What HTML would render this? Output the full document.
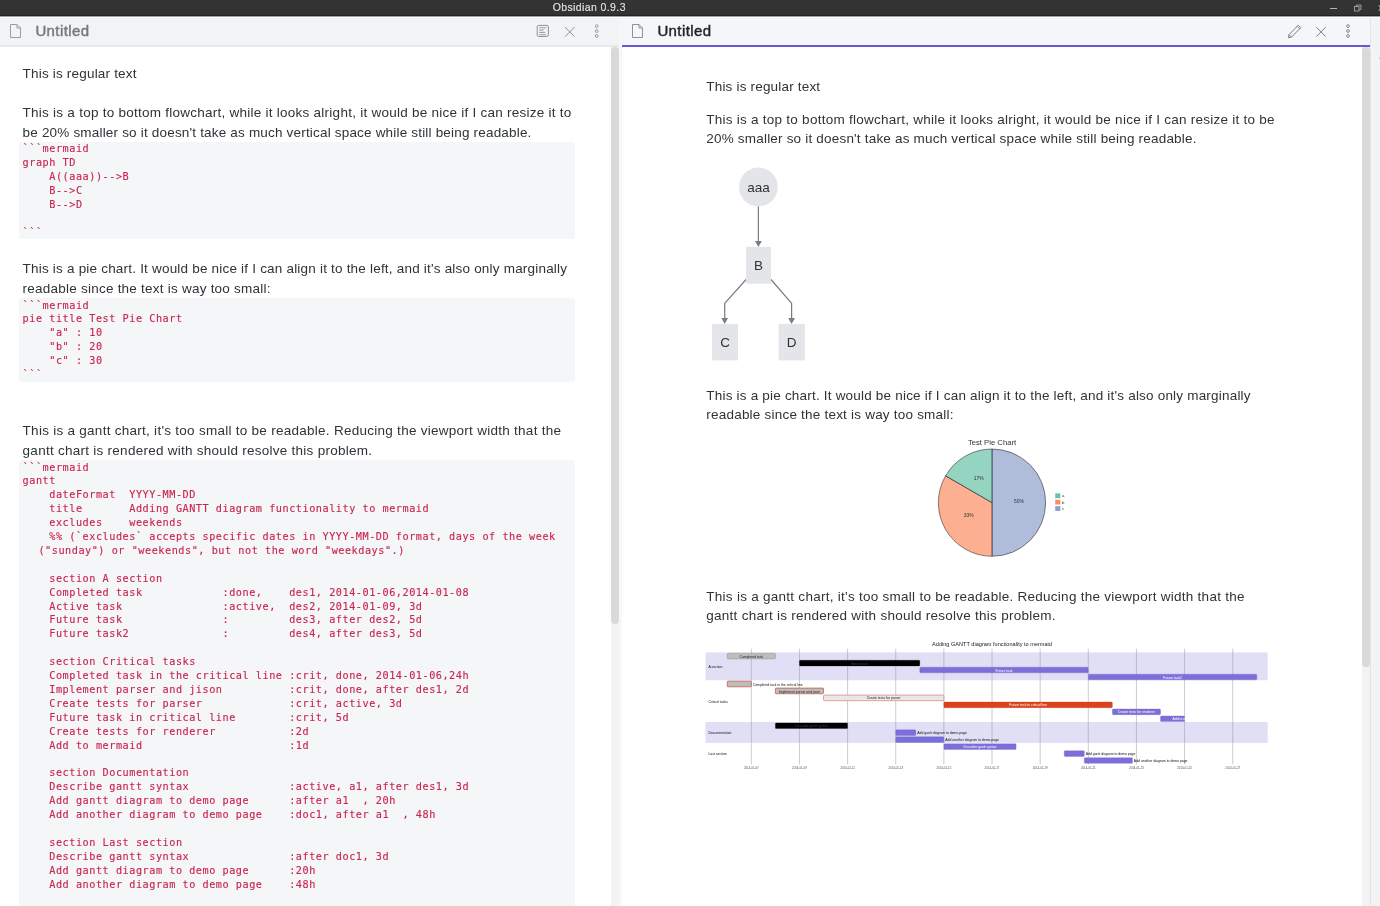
<!DOCTYPE html><html lang="en"><head><meta charset="utf-8"><title>Obsidian 0.9.3</title><style>
*{margin:0;padding:0;box-sizing:border-box}
html,body{width:1380px;height:906px;overflow:hidden;background:#f2f3f5}
body{font-family:"Liberation Sans",sans-serif;color:#2e3338;position:relative}
#app{position:absolute;left:0;top:0;width:1380px;height:906px;overflow:hidden;will-change:transform}
.abs{position:absolute}
.tb{position:absolute;left:0;top:0;width:1380px;height:16px;background:#333;border-bottom:1px solid #222}
.tbt{position:absolute;left:552.7px;top:0;height:15px;line-height:15px;font-size:10.5px;color:#d2d2d2;letter-spacing:.39px;white-space:nowrap;text-shadow:0 0 .4px #d2d2d2}
.gap{position:absolute;left:0;top:16px;width:1380px;height:3px;background:#fbfbfc;border-top:1px solid #a2a2a3;border-bottom:1px solid #f6f7f8}
.hdr{position:absolute;top:18px;height:27px}
.ttl{position:absolute;top:0;height:27px;line-height:27px;font-size:15px;white-space:nowrap;letter-spacing:.4px;-webkit-text-stroke:.45px currentColor}
.t{position:absolute;white-space:nowrap;font-size:13.5px;line-height:19.65px;height:19.65px;color:#2e3338}
.c{position:absolute;white-space:pre;font-family:"DejaVu Sans Mono","Liberation Mono",monospace;letter-spacing:0.5311px;font-size:10.2px;line-height:13.9px;height:13.9px;color:#c9254f;left:22.6px;-webkit-text-stroke:.13px #c9254f}
.cb{position:absolute;left:19px;width:556px;background:#f5f6f8;border-radius:3px}
svg{position:absolute;overflow:visible}
svg text{font-family:"Liberation Sans",sans-serif}
</style></head><body><div id="app">
<div class="tb"><div class="tbt">Obsidian 0.9.3</div>
<svg style="left:1320px;top:0" width="60" height="16" viewBox="0 0 60 16" fill="none" stroke="#9a9a9a" stroke-width="1"><path d="M10 8.5h7" stroke="#b4b4b4"/><rect x="34.5" y="6.5" width="4.5" height="4.5"/><path d="M36.5 6.5V5H41v4.5h-2"/><path d="M58.5 5l4 6M62.5 5l-4 6"/></svg>
</div><div class="gap"></div>
<div class="abs" style="left:0;top:18px;width:619px;height:888px;background:#fff"></div>
<div class="hdr" style="left:0;width:619px;background:#f2f3f5"></div>
<div class="abs" style="left:0;top:45px;width:619px;height:2px;background:#e7e8ea"></div>
<div class="ttl" style="left:35.4px;top:17px;color:#76797f">Untitled</div>
<div class="abs" style="left:619px;top:18px;width:3px;height:888px;background:#f7f8fa"></div>
<div class="abs" style="left:622px;top:18px;width:748px;height:888px;background:#fff"></div>
<div class="hdr" style="left:619px;width:751px;background:#f5f6f8"></div>
<div class="abs" style="left:622px;top:45px;width:748px;height:2px;background:#6658d8"></div>
<div class="ttl" style="left:657.4px;top:17px;color:#1f2329">Untitled</div>
<div class="abs" style="left:1370px;top:18px;width:1px;height:888px;background:#e4e5e7"></div>
<div class="abs" style="left:1378.6px;top:57px;width:3px;height:2px;background:#c3c5c9;border-radius:1px"></div>
<svg style="left:10px;top:24px" width="12" height="15" viewBox="0 0 12 15" fill="none" stroke="#9b9da3" stroke-width="1" stroke-linejoin="round"><path d="M.5.5H7L10.5 4v9.5H.5z"/><path d="M7 .5V4h3.5"/></svg>
<svg style="left:632px;top:24px" width="12" height="15" viewBox="0 0 12 15" fill="none" stroke="#8d9096" stroke-width="1" stroke-linejoin="round"><path d="M.5.5H7L10.5 4v9.5H.5z"/><path d="M7 .5V4h3.5"/></svg>
<svg style="left:536px;top:24px" width="14" height="14" viewBox="0 0 14 14" fill="none" stroke="#8e9197" stroke-width="1"><g transform="translate(0.70 0.90)"><rect x=".5" y=".5" width="11.2" height="11.1" rx="1.6"/><path d="M2.5 2.9h7M2.5 5.2h4.6M2.5 7.5h6M2.5 9.8h7" stroke-width=".9"/></g></svg>
<svg style="left:565px;top:27px" width="12" height="12" viewBox="0 0 12 12" fill="none" stroke="#8e9197" stroke-width="1"><g transform="translate(0.10 0.20)"><path d="M0 0l9.40 9.40M9.40 0L0 9.40"/></g></svg>
<svg style="left:593px;top:23px" width="7" height="17" viewBox="0 0 7 17" fill="none" stroke="#8e9197" stroke-width=".9"><g transform="translate(0.70 0.20)"><circle cx="3" cy="3" r="1.4"/><circle cx="3" cy="7.9" r="1.4"/><circle cx="3" cy="12.8" r="1.4"/></g></svg>
<svg style="left:1287px;top:24px" width="15" height="15" viewBox="0 0 15 15" fill="none" stroke="#7c7f85" stroke-width="1" stroke-linejoin="round"><g transform="translate(0.70 0.40)"><path d="M10.6.8l2.5 2.5-9.4 9.4-3 .6.6-3z"/><path d="M9.5 1.9l2.5 2.5M1.3 10.3l2.4 2.4"/></g></svg>
<svg style="left:1316px;top:27px" width="12" height="12" viewBox="0 0 12 12" fill="none" stroke="#7c7f85" stroke-width="1"><g transform="translate(0.30 0.20)"><path d="M0 0l9.40 9.40M9.40 0L0 9.40"/></g></svg>
<svg style="left:1345px;top:23px" width="7" height="17" viewBox="0 0 7 17" fill="none" stroke="#7c7f85" stroke-width=".9"><g transform="translate(0.00 0.10)"><circle cx="3" cy="3" r="1.4"/><circle cx="3" cy="7.9" r="1.4"/><circle cx="3" cy="12.8" r="1.4"/></g></svg>
<div class="abs" style="left:611px;top:47px;width:8px;height:859px;background:#f3f3f3"></div>
<div class="abs" style="left:611px;top:47px;width:8px;height:577px;background:#d9d9d9;border-radius:4px"></div>
<div class="abs" style="left:1362px;top:47px;width:8px;height:859px;background:#f3f3f3"></div>
<div class="abs" style="left:1362px;top:47px;width:8px;height:620px;background:#d9d9d9;border-radius:4px"></div>
<div class="t" id="l1" style="left:22.60px;top:63.70px;letter-spacing:0.190px">This is regular text</div>
<div class="t" id="l2" style="left:22.60px;top:103.00px;letter-spacing:0.253px">This is a top to bottom flowchart, while it looks alright, it would be nice if I can resize it to</div>
<div class="t" id="l3" style="left:22.60px;top:122.65px;letter-spacing:0.186px">be 20% smaller so it doesn't take as much vertical space while still being readable.</div>
<div class="cb" style="top:141.90px;height:97.30px"></div>
<div class="c" style="top:142.30px">```mermaid</div>
<div class="c" style="top:156.20px">graph TD</div>
<div class="c" style="top:170.10px">    A((aaa))--&gt;B</div>
<div class="c" style="top:184.00px">    B--&gt;C</div>
<div class="c" style="top:197.90px">    B--&gt;D</div>
<div class="c" style="top:225.70px">```</div>
<div class="t" id="l4" style="left:22.60px;top:259.25px;letter-spacing:0.202px">This is a pie chart. It would be nice if I can align it to the left, and it's also only marginally</div>
<div class="t" id="l5" style="left:22.60px;top:278.90px;letter-spacing:0.232px">readable since the text is way too small:</div>
<div class="cb" style="top:298.15px;height:83.40px"></div>
<div class="c" style="top:298.55px">```mermaid</div>
<div class="c" style="top:312.45px">pie title Test Pie Chart</div>
<div class="c" style="top:326.35px">    "a" : 10</div>
<div class="c" style="top:340.25px">    "b" : 20</div>
<div class="c" style="top:354.15px">    "c" : 30</div>
<div class="c" style="top:368.05px">```</div>
<div class="t" id="l6" style="left:22.60px;top:421.25px;letter-spacing:0.270px">This is a gantt chart, it's too small to be readable. Reducing the viewport width that the</div>
<div class="t" id="l7" style="left:22.60px;top:440.90px;letter-spacing:0.263px">gantt chart is rendered with should resolve this problem.</div>
<div class="cb" style="top:460.15px;height:449.45px"></div>
<div class="c" style="top:460.55px">```mermaid</div>
<div class="c" style="top:474.45px">gantt</div>
<div class="c" style="top:488.35px">    dateFormat  YYYY-MM-DD</div>
<div class="c" style="top:502.25px">    title       Adding GANTT diagram functionality to mermaid</div>
<div class="c" style="top:516.15px">    excludes    weekends</div>
<div class="c" style="top:530.05px">    %% (`excludes` accepts specific dates in YYYY-MM-DD format, days of the week</div>
<div class="c" style="top:543.95px;left:38.4px">("sunday") or "weekends", but not the word "weekdays".)</div>
<div class="c" style="top:571.75px">    section A section</div>
<div class="c" style="top:585.65px">    Completed task            :done,    des1, 2014-01-06,2014-01-08</div>
<div class="c" style="top:599.55px">    Active task               :active,  des2, 2014-01-09, 3d</div>
<div class="c" style="top:613.45px">    Future task               :         des3, after des2, 5d</div>
<div class="c" style="top:627.35px">    Future task2              :         des4, after des3, 5d</div>
<div class="c" style="top:655.15px">    section Critical tasks</div>
<div class="c" style="top:669.05px">    Completed task in the critical line :crit, done, 2014-01-06,24h</div>
<div class="c" style="top:682.95px">    Implement parser and jison          :crit, done, after des1, 2d</div>
<div class="c" style="top:696.85px">    Create tests for parser             :crit, active, 3d</div>
<div class="c" style="top:710.75px">    Future task in critical line        :crit, 5d</div>
<div class="c" style="top:724.65px">    Create tests for renderer           :2d</div>
<div class="c" style="top:738.55px">    Add to mermaid                      :1d</div>
<div class="c" style="top:766.35px">    section Documentation</div>
<div class="c" style="top:780.25px">    Describe gantt syntax               :active, a1, after des1, 3d</div>
<div class="c" style="top:794.15px">    Add gantt diagram to demo page      :after a1  , 20h</div>
<div class="c" style="top:808.05px">    Add another diagram to demo page    :doc1, after a1  , 48h</div>
<div class="c" style="top:835.85px">    section Last section</div>
<div class="c" style="top:849.75px">    Describe gantt syntax               :after doc1, 3d</div>
<div class="c" style="top:863.65px">    Add gantt diagram to demo page      :20h</div>
<div class="c" style="top:877.55px">    Add another diagram to demo page    :48h</div>
<div class="t" id="r1" style="left:706.30px;top:76.80px;letter-spacing:0.184px">This is regular text</div>
<div class="t" id="r2" style="left:706.30px;top:109.65px;letter-spacing:0.252px">This is a top to bottom flowchart, while it looks alright, it would be nice if I can resize it to be</div>
<div class="t" id="r3" style="left:706.30px;top:129.30px;letter-spacing:0.195px">20% smaller so it doesn't take as much vertical space while still being readable.</div>
<div class="t" id="r4" style="left:706.30px;top:385.50px;letter-spacing:0.200px">This is a pie chart. It would be nice if I can align it to the left, and it's also only marginally</div>
<div class="t" id="r5" style="left:706.30px;top:405.15px;letter-spacing:0.214px">readable since the text is way too small:</div>
<div class="t" id="r6" style="left:706.30px;top:586.80px;letter-spacing:0.268px">This is a gantt chart, it's too small to be readable. Reducing the viewport width that the</div>
<div class="t" id="r7" style="left:706.30px;top:606.45px;letter-spacing:0.259px">gantt chart is rendered with should resolve this problem.</div>
<svg style="left:700px;top:160px" width="120" height="210" viewBox="700 160 120 210">
<g fill="none" stroke="#7b7d84" stroke-width="1.25" stroke-linejoin="round"><path d="M758.4 206v36"/><path d="M746.1 279.5L724.7 303.4V319"/><path d="M771 279.5L791.6 303.4V319"/></g>
<g fill="#7b7d84"><path d="M755 241h6.8l-3.4 5.9z"/><path d="M721.3 318h6.8l-3.4 5.9z"/><path d="M788.2 318h6.8l-3.4 5.9z"/></g>
<g fill="#e3e5e8"><circle cx="758.4" cy="187" r="19.4"/><rect x="746.1" y="246.9" width="24.9" height="36.7"/><rect x="712.1" y="323.9" width="25.9" height="36.5"/><rect x="778.6" y="323.9" width="26.3" height="36.5"/></g>
<g font-size="13.5" fill="#2e3338" text-anchor="middle"><text x="758.4" y="191.7">aaa</text><text x="758.5" y="270">B</text><text x="725" y="347">C</text><text x="791.7" y="347">D</text></g>
</svg>
<svg style="left:705px;top:437px" width="574" height="132" viewBox="-1.724 -1.379 1979.310 455.172">
<path d="M988.0 225.0L988.0 40.0A185 185 0 0 1 988.0 410.0Z" fill="#8da0cb" fill-opacity=".7" stroke="#111" stroke-width="1.7"/>
<path d="M988.0 225.0L988.0 410.0A185 185 0 0 1 827.8 132.5Z" fill="#fc8d62" fill-opacity=".7" stroke="#111" stroke-width="1.7"/>
<path d="M988.0 225.0L827.8 132.5A185 185 0 0 1 988.0 40.0Z" fill="#66c2a5" fill-opacity=".7" stroke="#111" stroke-width="1.7"/>
<g font-size="17" fill="#333" text-anchor="middle">
<text x="1080.5" y="227.5">50%</text>
<text x="907.9" y="273.8">33%</text>
<text x="941.8" y="147.4">17%</text>
</g>
<text x="988" y="25" font-size="26.5" fill="#333" text-anchor="middle">Test Pie Chart</text>
<rect x="1206" y="193" width="17.5" height="16.5" fill="#66c2a5"/><text x="1229" y="206" font-size="15" fill="#333">a</text>
<rect x="1206" y="215" width="17.5" height="16.5" fill="#fc8d62"/><text x="1229" y="228" font-size="15" fill="#333">b</text>
<rect x="1206" y="237" width="17.5" height="16.5" fill="#8da0cb"/><text x="1229" y="250" font-size="15" fill="#333">c</text>
</svg>
<svg style="left:705px;top:638px" width="574" height="142" viewBox="-1.724 -1.724 1979.310 489.655">
<rect x="0" y="48" width="1938.5" height="96" fill="#e1dff5"/>
<rect x="0" y="288" width="1938.5" height="72" fill="#e1dff5"/>
<g stroke="#8f8da0" stroke-width="1.6" fill="none">
<path d="M158.0 35V434"/>
<path d="M324.0 35V434"/>
<path d="M490.0 35V434"/>
<path d="M656.0 35V434"/>
<path d="M822.0 35V434"/>
<path d="M988.0 35V434"/>
<path d="M1154.0 35V434"/>
<path d="M1320.0 35V434"/>
<path d="M1486.0 35V434"/>
<path d="M1652.0 35V434"/>
<path d="M1818.0 35V434"/>
</g>
<g font-size="10" fill="#555" text-anchor="middle">
<text x="158.0" y="450">2014-01-07</text>
<text x="324.0" y="450">2014-01-09</text>
<text x="490.0" y="450">2014-01-11</text>
<text x="656.0" y="450">2014-01-13</text>
<text x="822.0" y="450">2014-01-15</text>
<text x="988.0" y="450">2014-01-17</text>
<text x="1154.0" y="450">2014-01-19</text>
<text x="1320.0" y="450">2014-01-21</text>
<text x="1486.0" y="450">2014-01-23</text>
<text x="1652.0" y="450">2014-01-25</text>
<text x="1818.0" y="450">2014-01-27</text>
</g>
<rect x="75.0" y="51" width="166.0" height="19.5" rx="3" ry="3" fill="#bdbdbd" stroke="#8c8c8c" stroke-width="1.5"/>
<rect x="324.0" y="75" width="415.0" height="19.5" rx="3" ry="3" fill="#000" stroke="#000" stroke-width="1"/>
<rect x="739.0" y="99" width="581.0" height="19.5" rx="3" ry="3" fill="#7c6fd9" stroke="#6a5ccf" stroke-width="1"/>
<rect x="1320.0" y="123" width="581.0" height="19.5" rx="3" ry="3" fill="#7c6fd9" stroke="#6a5ccf" stroke-width="1"/>
<rect x="75.0" y="147" width="83.0" height="19.5" rx="3" ry="3" fill="#bdbdbd" stroke="#c44a30" stroke-width="2.4"/>
<rect x="241.0" y="171" width="166.0" height="19.5" rx="3" ry="3" fill="#bdbdbd" stroke="#c44a30" stroke-width="2.4"/>
<rect x="407.0" y="195" width="415.0" height="19.5" rx="3" ry="3" fill="#e6e8ea" stroke="#d7735c" stroke-width="2.2"/>
<rect x="822.0" y="219" width="581.0" height="19.5" rx="3" ry="3" fill="#d9431f" stroke="#cf3410" stroke-width="1"/>
<rect x="1403.0" y="243" width="166.0" height="19.5" rx="3" ry="3" fill="#7c6fd9" stroke="#6a5ccf" stroke-width="1"/>
<rect x="1569.0" y="267" width="83.0" height="19.5" rx="3" ry="3" fill="#7c6fd9" stroke="#6a5ccf" stroke-width="1"/>
<rect x="241.0" y="291" width="249.0" height="19.5" rx="3" ry="3" fill="#000" stroke="#000" stroke-width="1"/>
<rect x="656.0" y="315" width="69.2" height="19.5" rx="3" ry="3" fill="#7c6fd9" stroke="#6a5ccf" stroke-width="1"/>
<rect x="656.0" y="339" width="166.0" height="19.5" rx="3" ry="3" fill="#7c6fd9" stroke="#6a5ccf" stroke-width="1"/>
<rect x="822.0" y="363" width="249.0" height="19.5" rx="3" ry="3" fill="#7c6fd9" stroke="#6a5ccf" stroke-width="1"/>
<rect x="1237.0" y="387" width="69.2" height="19.5" rx="3" ry="3" fill="#7c6fd9" stroke="#6a5ccf" stroke-width="1"/>
<rect x="1306.2" y="411" width="166.0" height="19.5" rx="3" ry="3" fill="#7c6fd9" stroke="#6a5ccf" stroke-width="1"/>
<text x="158.0" y="66.3" font-size="11.8" fill="#222" text-anchor="middle">Completed task</text>
<text x="531.5" y="90.3" font-size="11.8" fill="#3a3a3a" text-anchor="middle">Active task</text>
<text x="1029.5" y="114.3" font-size="11.8" fill="#fff" text-anchor="middle">Future task</text>
<text x="1610.5" y="138.3" font-size="11.8" fill="#fff" text-anchor="middle">Future task2</text>
<text x="163.0" y="162.3" font-size="11.8" fill="#111">Completed task in the critical line</text>
<text x="324.0" y="186.3" font-size="11.8" fill="#222" text-anchor="middle">Implement parser and jison</text>
<text x="614.5" y="210.3" font-size="11.8" fill="#222" text-anchor="middle">Create tests for parser</text>
<text x="1112.5" y="234.3" font-size="11.8" fill="#fff" text-anchor="middle">Future task in critical line</text>
<text x="1486.0" y="258.3" font-size="11.8" fill="#fff" text-anchor="middle">Create tests for renderer</text>
<text x="1610.5" y="282.3" font-size="11.8" fill="#fff">Add to mermaid</text>
<text x="365.5" y="306.3" font-size="11.8" fill="#3a3a3a" text-anchor="middle">Describe gantt syntax</text>
<text x="730.2" y="330.3" font-size="11.8" fill="#111">Add gantt diagram to demo page</text>
<text x="827.0" y="354.3" font-size="11.8" fill="#111">Add another diagram to demo page</text>
<text x="946.5" y="378.3" font-size="11.8" fill="#fff" text-anchor="middle">Describe gantt syntax</text>
<text x="1311.2" y="402.3" font-size="11.8" fill="#111">Add gantt diagram to demo page</text>
<text x="1477.2" y="426.3" font-size="11.8" fill="#111">Add another diagram to demo page</text>
<text x="10" y="103.0" font-size="11.9" fill="#111">A section</text>
<text x="10" y="223.0" font-size="11.9" fill="#111">Critical tasks</text>
<text x="10" y="331.0" font-size="11.9" fill="#111">Documentation</text>
<text x="10" y="403.0" font-size="11.9" fill="#111">Last section</text>
<text x="988" y="25" font-size="19.3" fill="#222" text-anchor="middle">Adding GANTT diagram functionality to mermaid</text>
</svg>
</div></body></html>
